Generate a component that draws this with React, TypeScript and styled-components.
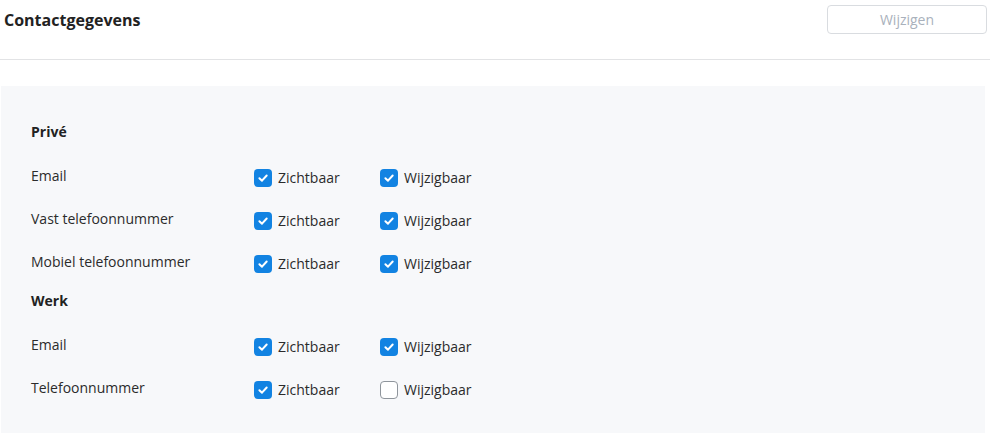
import * as React from "react";
import styled, { createGlobalStyle } from "styled-components";

const GlobalStyle = createGlobalStyle`
    html, body {
        margin: 0;
        padding: 0;
        background: #ffffff;
        font-family: "Open Sans", "Liberation Sans", sans-serif;
        color: #2b2b2b;
    }
`;

const Header = styled.div`
    height: 60px;
    box-sizing: border-box;
    padding: 0 3px 20px 4px;
    display: flex;
    align-items: center;
    justify-content: space-between;
    border-bottom: 1px solid #e2e3e5;
`;

const Title = styled.h1`
    margin: 0;
    font-size: 16px;
    font-weight: 700;
    color: #222;
`;

const EditButton = styled.button`
    width: 160px;
    height: 29px;
    background: #fff;
    border: 1px solid #d9dce0;
    border-radius: 4px;
    font-family: inherit;
    font-size: 14px;
    color: #a9b1bc;
    cursor: default;
`;

const Panel = styled.div`
    margin: 26px 5px 0 1px;
    padding: 36px 30px 30px;
    background: #f7f8fa;
`;

const Section = styled.div`
    & + & {
        margin-top: 6px;
    }
`;

const SectionTitle = styled.h2`
    margin: 0 0 14px;
    font-size: 14px;
    line-height: 20px;
    font-weight: 700;
    color: #222;
`;

const Row = styled.div`
    height: 43px;
    display: flex;
    align-items: center;
`;

const Label = styled.div`
    width: 223px;
    font-size: 14px;
    padding-bottom: 4px;
    color: #2b2b2b;
`;

const Option = styled.label`
    width: 126px;
    display: flex;
    align-items: center;
    gap: 6px;
    font-size: 14px;
    color: #2b2b2b;
`;

const Box = styled.span<{ $checked: boolean }>`
    width: 18px;
    height: 18px;
    box-sizing: border-box;
    border-radius: 4px;
    display: flex;
    align-items: center;
    justify-content: center;
    background: ${p => (p.$checked ? "#1283e2" : "#fff")};
    border: ${p => (p.$checked ? "none" : "1.5px solid #8f959c")};
`;

const Check = ({ checked, label }: { checked: boolean; label: string }) =>
    <Option>
        <Box $checked={checked}>
            {checked && <svg width="12" height="12" viewBox="0 0 12 12">
                <path d="M2.4 6.2 L5 8.7 L9.7 3.5" fill="none" stroke="#fff" strokeWidth="2"
                      strokeLinecap="round" strokeLinejoin="round"/>
            </svg>}
        </Box>
        {label}
    </Option>;

interface Field {
    name: string
    visible: boolean
    editable: boolean
}

const sections: { title: string; fields: Field[] }[] = [
    {
        title: "Privé",
        fields: [
            {name: "Email", visible: true, editable: true},
            {name: "Vast telefoonnummer", visible: true, editable: true},
            {name: "Mobiel telefoonnummer", visible: true, editable: true},
        ],
    },
    {
        title: "Werk",
        fields: [
            {name: "Email", visible: true, editable: true},
            {name: "Telefoonnummer", visible: true, editable: false},
        ],
    },
];

export default function App() {
    return <>
        <GlobalStyle/>
        <Header>
            <Title>Contactgegevens</Title>
            <EditButton>Wijzigen</EditButton>
        </Header>
        <Panel>
            {sections.map(s =>
                <Section key={s.title}>
                    <SectionTitle>{s.title}</SectionTitle>
                    {s.fields.map(f =>
                        <Row key={f.name}>
                            <Label>{f.name}</Label>
                            <Check checked={f.visible} label="Zichtbaar"/>
                            <Check checked={f.editable} label="Wijzigbaar"/>
                        </Row>
                    )}
                </Section>
            )}
        </Panel>
    </>;
}
